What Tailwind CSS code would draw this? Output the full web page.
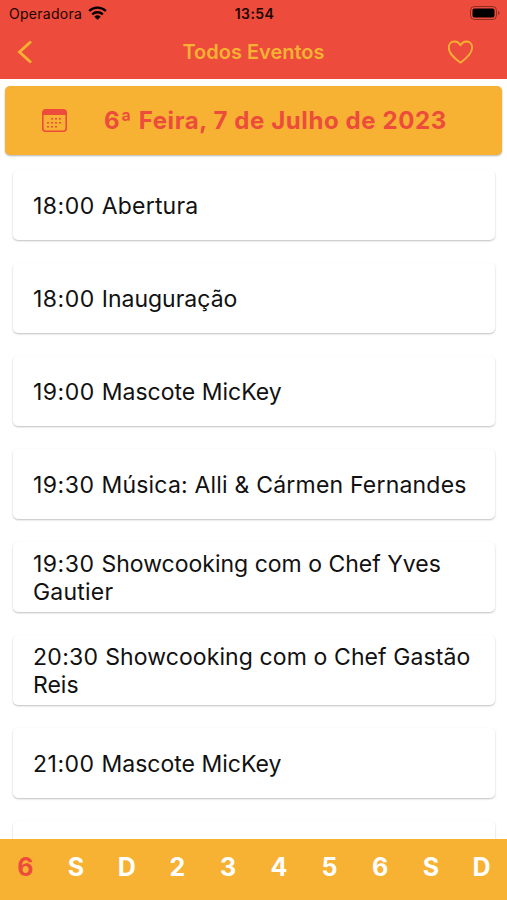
<!DOCTYPE html>
<html lang="pt">
<head>
  <meta charset="UTF-8" />
  <meta name="viewport" content="width=device-width, initial-scale=1.0" />
  <title>Todos Eventos</title>
  <script src="https://cdn.jsdelivr.net/npm/@tailwindcss/browser@4"></script>
</head>
<body class="bg-white font-['Inter',sans-serif] text-[#111]">
  <div class="flex h-[900px] w-[507px] flex-col overflow-hidden">
    <!-- Cabeçalho -->
    <header class="h-[79px] shrink-0 bg-[#ed4b3b]">
      <div class="grid h-[27px] grid-cols-3 items-center pr-[7px] pl-[9px] text-[14px] text-[#210604]">
        <div class="flex items-center gap-[6px]">
          <span class="tracking-[0.28px]">Operadora</span>
          <svg class="h-[14px] w-[19px] -translate-y-px" viewBox="0 0 19 14" fill="none" stroke="black" stroke-width="2.4">
            <path d="M1.200 5a12 12 0 0 1 16.600 0M4.200 8.300a7.800 7.800 0 0 1 10.600 0" />
            <path d="M6.300 10.700a4.700 4.700 0 0 1 6.400 0L9.500 13.800z" fill="black" stroke="none" />
          </svg>
        </div>
        <span class="text-center font-semibold tracking-[0.4px]">13:54</span>
        <svg class="h-[14px] w-[30px] -translate-y-px justify-self-end" viewBox="0 0 30 14">
          <rect x="0.5" y="0.5" width="26" height="13" rx="4" fill="none" stroke="black" stroke-opacity=".4" />
          <rect x="2.500" y="2.500" width="22" height="9" rx="2" />
          <path d="M28 5v4q1.500-.5 1.500-2T28 5z" fill-opacity=".4" />
        </svg>
      </div>
      <div class="grid h-[50px] grid-cols-[60px_1fr_60px] items-center text-[#f7b233]">
        <svg class="ml-[17px] h-6 w-4" viewBox="0 0 16 24" fill="none" stroke="currentColor" stroke-width="2.800">
          <path d="M14 1.500L2.500 12 14 22.500" />
        </svg>
        <h1 class="text-center text-[20px] font-semibold">Todos Eventos</h1>
        <svg class="h-6 w-[26px]" viewBox="0 0 26 24" fill="none" stroke="currentColor" stroke-width="1.800" stroke-linejoin="round">
          <path d="M13.500 22.700C8.500 19 1.800 14 1.800 7.700c0-3.700 2.400-6.200 5.600-6.200 2.600 0 4.700 1.300 6.100 3.800 1.400-2.500 3.400-3.800 6-3.800 3.300 0 5.600 2.500 5.600 6.200 0 6.300-6.600 11.300-11.600 15z" />
        </svg>
      </div>
    </header>

    <!-- Data selecionada -->
    <div class="mx-[5px] mt-[7px] flex h-[69px] shrink-0 items-center rounded-[5px] bg-[#f7b233] pl-[37px] text-[#ed4b3b] shadow-[0_1px_2px_rgba(0,0,0,0.3)]">
      <svg class="h-[23px] w-[25px]" viewBox="0 0 25 23" fill="none" stroke="currentColor" stroke-width="1.600">
        <rect x="0.8" y="0.8" width="23.400" height="21.400" rx="3" />
        <path d="M1 6V4a3 3 0 0 1 3-3h17a3 3 0 0 1 3 3v2z" fill="currentColor" stroke="none" />
        <path d="M9 9.800h11M5 13.800h15M5 17.800h11" stroke-dasharray="2 2" />
      </svg>
      <span class="ml-[37px] whitespace-nowrap text-[24px] font-bold tracking-[0.6px]">6ª Feira, 7 de Julho de 2023</span>
    </div>

    <!-- Lista de eventos -->
    <main class="flex min-h-0 flex-1 flex-col gap-[23px] overflow-hidden pr-3 pl-[13px] pt-[15px] text-[23px] leading-7">
      <div class="flex h-[70px] shrink-0 items-center rounded-[5px] px-5 pt-0.5 shadow-[0_1px_2px_rgba(0,0,0,0.25)]"><p><span class="tracking-[0.5px]">18:00 </span><span class="tracking-[0.2px]">Abertura</span></p></div>
      <div class="flex h-[70px] shrink-0 items-center rounded-[5px] px-5 pt-0.5 shadow-[0_1px_2px_rgba(0,0,0,0.25)]"><p><span class="tracking-[0.5px]">18:00 </span>Inauguração</p></div>
      <div class="flex h-[70px] shrink-0 items-center rounded-[5px] px-5 pt-0.5 shadow-[0_1px_2px_rgba(0,0,0,0.25)]"><p><span class="tracking-[0.5px]">19:00 </span>Mascote MicKey</p></div>
      <div class="flex h-[70px] shrink-0 items-center rounded-[5px] px-5 pt-0.5 shadow-[0_1px_2px_rgba(0,0,0,0.25)]"><p><span class="tracking-[0.5px]">19:30 </span><span class="tracking-[0.2px]">Música: Alli &amp; Cármen Fernandes</span></p></div>
      <div class="flex h-[70px] shrink-0 items-center rounded-[5px] px-5 pt-0.5 shadow-[0_1px_2px_rgba(0,0,0,0.25)]"><p><span class="tracking-[0.5px]">19:30 </span>Showcooking com o Chef Yves<br><span class="tracking-[0.2px]">Gautier</span></p></div>
      <div class="flex h-[70px] shrink-0 items-center rounded-[5px] px-5 pt-0.5 shadow-[0_1px_2px_rgba(0,0,0,0.25)]"><p><span class="tracking-[0.3px]">20:30 </span><span class="tracking-[0.1px]">Showcooking com o Chef Gastão</span><br>Reis</p></div>
      <div class="flex h-[70px] shrink-0 items-center rounded-[5px] px-5 pt-0.5 shadow-[0_1px_2px_rgba(0,0,0,0.25)]"><p><span class="tracking-[0.5px]">21:00 </span>Mascote MicKey</p></div>
      <div class="h-[70px] shrink-0 rounded-[5px] shadow-[0_1px_2px_rgba(0,0,0,0.25)]"></div>
    </main>

    <!-- Dias -->
    <nav class="grid h-[61px] w-[507px] shrink-0 grid-cols-10 items-center bg-[#f7b233] pb-[3px] text-center text-[25px] font-bold text-white">
      <span class="text-[#ed4b3b]">6</span>
      <span>S</span>
      <span>D</span>
      <span>2</span>
      <span>3</span>
      <span>4</span>
      <span>5</span>
      <span>6</span>
      <span>S</span>
      <span>D</span>
    </nav>
  </div>
</body>
</html>
